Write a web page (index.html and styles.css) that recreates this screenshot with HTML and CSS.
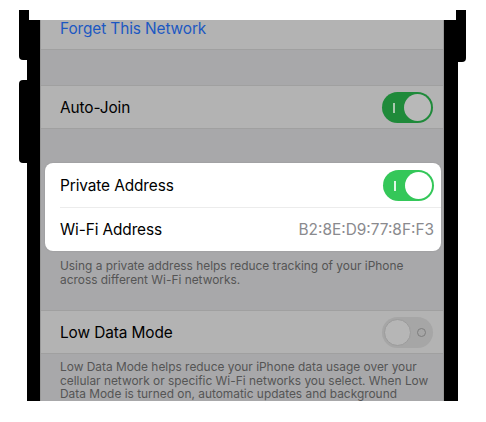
FILE: index.html
```html
<!DOCTYPE html>
<html lang="en">
  <head>
    <meta charset="UTF-8" />
    <meta name="viewport" content="width=device-width, initial-scale=1.0" />
    <title>Wi-Fi Settings</title>
    <link rel="stylesheet" href="styles.css">
  </head>
  <body>
    <div class="stage">
      <div class="phone">
        <span class="side-btn side-action"></span>
        <span class="side-btn side-volume"></span>
        <span class="side-btn side-power"></span>

        <div class="screen">
          <div class="settings">
            <div class="row first">
              <span class="label link">Forget This Network</span>
            </div>
            <div class="gap"></div>
            <div class="row">
              <span class="label">Auto-Join</span>
              <span class="toggle on dim"><span class="mark"></span><span class="knob"></span></span>
            </div>
            <div class="gap short"></div>

            <div class="card">
              <div class="card-row">
                <span class="label">Private Address</span>
                <span class="toggle on"><span class="mark"></span><span class="knob"></span></span>
              </div>
              <div class="card-row">
                <span class="label">Wi-Fi Address</span>
                <span class="value">B2:8E:D9:77:8F:F3</span>
              </div>
            </div>
            <p class="footer tall">
              Using a private address helps reduce tracking of your iPhone<br>
              across different Wi-Fi networks.
            </p>

            <div class="row">
              <span class="label">Low Data Mode</span>
              <span class="toggle off"><span class="knob"></span><span class="mark"></span></span>
            </div>
            <p class="footer compact">
              Low Data Mode helps reduce your iPhone data usage over your<br>
              cellular network or specific Wi-Fi networks you select. When Low<br>
              Data Mode is turned on, automatic updates and background
            </p>
          </div>
        </div>
      </div>
    </div>
  </body>
</html>
```

FILE: styles.css
```css
:root {
  --row-bg: #b3b3b3;
  --gap-bg: #a8a8aa;
  --sep: #a0a0a0;
  --green: #34c759;
  --green-dim: #1f8a3a;
}
html,
body {
  margin: 0;
  background: #fff;
}
body {
  font-family: Inter, "Liberation Sans", sans-serif;
  color: #000;
}
.stage {
  padding-top: 20px;
  height: 402px;
  overflow: hidden;
  box-sizing: border-box;
}
.phone {
  position: relative;
  width: 431px;
  height: 381px;
  margin-left: 27px;
  background: #000;
  border-left: 13px solid #000;
  border-right: 14px solid #000;
  box-sizing: border-box;
}

/* hardware buttons sticking out of the frame */
.side-btn {
  position: absolute;
  background: #000;
}
.side-action {
  left: -21px;
  top: -10px;
  width: 10px;
  height: 50px;
  border-radius: 0 0 0 4px;
}
.side-volume {
  left: -21px;
  top: 60px;
  width: 10px;
  height: 83px;
  border-radius: 4px 0 0 4px;
}
.side-power {
  right: -22px;
  top: -10px;
  width: 10px;
  height: 52px;
  border-radius: 0 0 4px 0;
}

.screen {
  height: 100%;
  overflow: hidden;
  background: var(--gap-bg);
  border-left: 1px solid #9a9a9a;
  border-right: 1px solid #9a9a9a;
  box-sizing: border-box;
}
.settings {
  margin-top: -13px;
}
.row {
  display: flex;
  align-items: center;
  justify-content: space-between;
  height: 44px;
  padding: 0 10px 0 19px;
  background: var(--row-bg);
  border-top: 1px solid var(--sep);
  border-bottom: 1px solid var(--sep);
  box-sizing: border-box;
}
.row.first {
  height: 43px;
  border-top: none;
}
.gap {
  height: 35px;
}
.gap.short {
  height: 34px;
}
.label {
  font-size: 15.4px;
  letter-spacing: -0.1px;
  white-space: nowrap;
}
.link {
  color: #1c58c2;
}

.card {
  margin: 0 2px 0 4px;
  background: #fff;
  border-radius: 8px;
  box-shadow: 0 0 2px rgba(0, 0, 0, 0.12);
}
.card-row {
  display: flex;
  align-items: center;
  justify-content: space-between;
  height: 44px;
  margin-left: 15px;
  padding-right: 7px;
  box-sizing: border-box;
}
.card-row:first-child {
  padding-top: 1px;
}
.card-row + .card-row {
  border-top: 1px solid #ececec;
}
.value {
  font-size: 15.4px;
  color: #8a8a8e;
}

.footer {
  margin: 0;
  padding: 8px 19px 0;
  font-size: 11.9px;
  line-height: 13.8px;
  color: #555;
  white-space: nowrap;
}
.footer.tall {
  height: 59px;
  box-sizing: border-box;
}
.footer.compact {
  padding-top: 6px;
  line-height: 13.5px;
}

/* switches */
.toggle {
  position: relative;
  display: flex;
  align-items: center;
  width: 51px;
  height: 31px;
  border-radius: 16px;
  box-sizing: border-box;
  padding: 2px;
}
.toggle .knob {
  width: 27px;
  height: 27px;
  border-radius: 50%;
  box-sizing: border-box;
}
.toggle.on {
  background: var(--green);
  justify-content: flex-end;
}
.toggle.on .knob {
  background: #fff;
}
.toggle.on .mark {
  position: absolute;
  left: 11px;
  top: 11px;
  width: 1.5px;
  height: 10px;
  background: rgba(255, 255, 255, 0.85);
}
.toggle.on.dim {
  background: var(--green-dim);
}
.toggle.on.dim .knob {
  background: #b8b8b8;
}
.toggle.on.dim .mark {
  background: #a9c9ae;
}
.toggle.off {
  background: #a6a6a6;
  justify-content: space-between;
}
.toggle.off .knob {
  background: #b6b6b6;
  border: 1px solid #9b9b9b;
}
.toggle.off .mark {
  width: 9px;
  height: 9px;
  margin-right: 5px;
  border: 1.5px solid #7d7d7d;
  border-radius: 50%;
  box-sizing: border-box;
}
```
